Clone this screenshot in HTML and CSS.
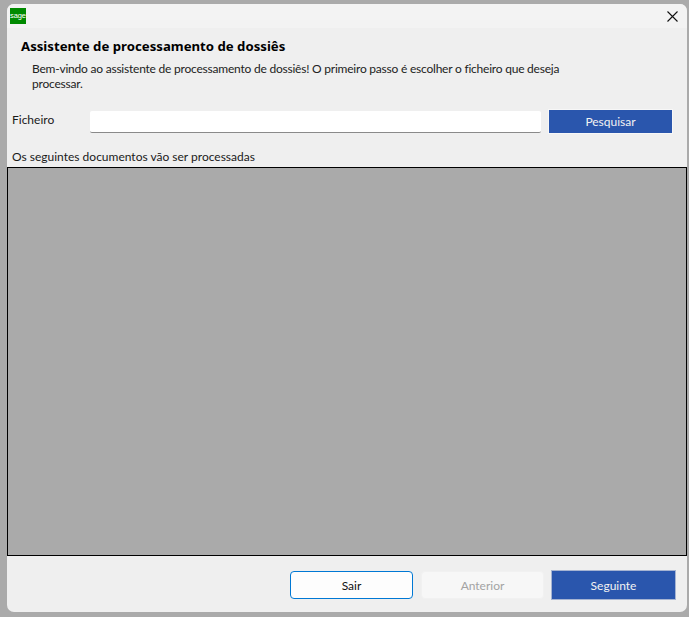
FILE: index.html
```html
<!DOCTYPE html>
<html lang="pt">
<head>
<meta charset="utf-8">
<title>Assistente de processamento de dossiês</title>
<link rel="stylesheet" href="styles.css">
</head>
<body>
<div class="window">
  <header class="titlebar">
    <span class="logo">sage</span>
    <svg class="close" viewBox="0 0 11 11" width="11" height="11" aria-label="Fechar"><path d="M0.5 0.5L10.5 10.5M10.5 0.5L0.5 10.5"/></svg>
  </header>
  <section class="intro">
    <h1 class="heading">Assistente de processamento de dossiês</h1>
    <p class="desc">Bem-vindo ao assistente de processamento de dossiês! O primeiro passo é escolher o ficheiro que deseja processar.</p>
  </section>
  <div class="file-row">
    <label class="file-label">Ficheiro</label>
    <div class="file-input"></div>
    <button class="btn btn-primary btn-search">Pesquisar</button>
  </div>
  <div class="list-label">Os seguintes documentos vão ser processadas</div>
  <div class="panel"></div>
  <footer class="actions">
    <button class="btn btn-outline">Sair</button>
    <button class="btn btn-disabled">Anterior</button>
    <button class="btn btn-primary btn-next">Seguinte</button>
  </footer>
</div>
</body>
</html>
```
FILE: styles.css
```css
* { box-sizing: border-box; }
html, body { height: 100%; }
body {
  margin: 0;
  background: #aaaaaa;
  padding: 4px 2px 5px 7px;
  font-family: "Lato", "Noto Sans", sans-serif;
  font-size: 12px;
  color: #1a1a1a;
  overflow: hidden;
}
.window {
  height: 608px;
  background: #efefef;
  border-radius: 7px;
  display: flex;
  flex-direction: column;
  overflow: hidden;
}
.titlebar {
  height: 24px;
  flex: none;
  background: #f3f3f3;
  display: flex;
  align-items: center;
  justify-content: space-between;
  padding: 0 9px 0 3px;
}
.logo {
  width: 16px;
  height: 16px;
  background: #008a00;
  color: #fff;
  font-family: "Liberation Sans", sans-serif;
  font-size: 7.5px;
  line-height: 15px;
  text-align: center;
  letter-spacing: -0.1px;
  margin-top: -1px;
}
.close { stroke: #111; stroke-width: 1.1; fill: none; }
.intro {
  flex: none;
  height: 67px;
  padding: 9px 0 0 14px;
}
.heading {
  margin: 0;
  font-family: "Noto Sans", sans-serif;
  font-size: 13.2px;
  font-weight: 700;
  line-height: 18px;
  color: #000;
}
.desc {
  margin: 6px 0 0 11px;
  width: 565px;
  line-height: 15px;
  letter-spacing: -0.22px;
  color: #222;
}
.file-row {
  flex: none;
  height: 30px;
  display: flex;
  align-items: center;
  padding-left: 5px;
  margin-top: 12px;
}
.file-label { width: 78px; margin-top: -5px; }
.file-input {
  width: 451px;
  height: 22px;
  background: #fff;
  border-bottom: 1px solid #8a8a8a;
  border-radius: 2px;
}
.btn {
  font-family: inherit;
  font-size: 12px;
  padding: 0;
  cursor: default;
}
.btn-primary {
  background: #2a56ad;
  color: #f2f2f2;
}
.btn-search {
  width: 125px;
  height: 25px;
  margin-left: 7px;
  margin-top: -1px;
  border: 1px solid #f7f7f7;
}
.list-label {
  flex: none;
  height: 30px;
  padding: 12px 0 0 5px;
  line-height: 15px;
}
.panel {
  flex: none;
  height: 389px;
  width: 680px;
  background: #aaaaaa;
  border: 1px solid #000;
}
.actions {
  flex: 1;
  display: flex;
  align-items: flex-start;
  padding: 15px 0 0 283px;
}
.btn-outline {
  width: 123px;
  height: 28px;
  background: #fdfdfd;
  color: #111;
  border: 1px solid #0078d4;
  border-radius: 4px;
}
.btn-disabled {
  width: 123px;
  height: 28px;
  margin-left: 8px;
  background: #f7f7f7;
  color: #a3a3a3;
  border: 1px solid #f1f1f1;
  border-radius: 4px;
}
.btn-next {
  width: 125px;
  height: 30px;
  margin-left: 7px;
  margin-top: -1px;
  border: 1px solid #a6b4d2;
}
```
